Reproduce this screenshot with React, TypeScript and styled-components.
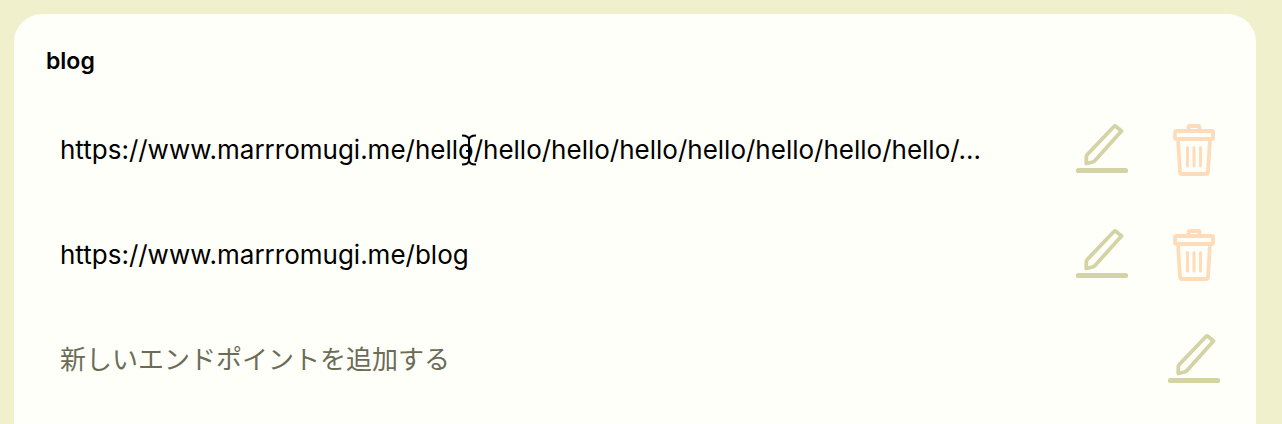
import React from "react";
import styled, { createGlobalStyle } from "styled-components";

const GlobalStyle = createGlobalStyle`
  * { box-sizing: border-box; }
  body {
    margin: 0;
    background: #f1f0cc;
    color: #000;
    font-family: Inter, "Noto Sans CJK JP", sans-serif;
  }
`;

const Page = styled.main`
  padding: 14px 26px 0 14px;
`;

const Card = styled.section`
  min-height: calc(100vh - 14px);
  padding: 32px 32px 0;
  border-radius: 28px 28px 0 0;
  background: #fffffa;
`;

const Title = styled.h2`
  margin: 0 0 37px;
  font-size: 23px;
  line-height: 30px;
  font-weight: 600;
`;

const List = styled.ul`
  display: flex;
  flex-direction: column;
  gap: 32px;
  margin: 0;
  padding: 0;
  list-style: none;
`;

const Row = styled.li`
  display: flex;
  align-items: center;
  gap: 36px;
  height: 73px;
  padding: 0 2px 0 14px;
`;

const Field = styled.div`
  position: relative;
  flex: 1;
  min-width: 0;
  margin-right: 32px;
`;

const Endpoint = styled.input`
  display: block;
  width: 100%;
  height: 40px;
  padding: 0;
  border: 0;
  outline: 0;
  background: transparent;
  color: #000;
  font: 400 26px/40px Inter, "Noto Sans CJK JP", sans-serif;
  text-overflow: ellipsis;

  &::placeholder {
    color: #6c6c56;
    opacity: 1;
  }
`;

const TextCursor = styled.svg`
  position: absolute;
  top: 4px;
  left: 400px;
  width: 18px;
  height: 32px;
`;

const IconButton = styled.button<{ $tone: string }>`
  display: flex;
  padding: 0;
  border: 0;
  background: none;
  color: ${(p) => p.$tone};
  cursor: pointer;

  svg {
    width: 56px;
    height: 56px;
  }
`;

const EditButton = () => (
  <IconButton type="button" $tone="#d3d3a6" aria-label="編集">
    <svg viewBox="0 0 56 56" fill="none" stroke="currentColor" strokeLinejoin="round">
      <path d="M40 4.500Q41 3.500 42 4.500L47.500 9L21 38.500Q20 39.500 18.500 40L12.300 41.500L12.300 35Q12.300 33.500 13.300 32.500Z" strokeWidth="3.800" />
      <path d="M4.500 48.500H51.500" strokeWidth="5.200" strokeLinecap="round" />
    </svg>
  </IconButton>
);

const DeleteButton = () => (
  <IconButton type="button" $tone="#ffdcb9" aria-label="削除">
    <svg viewBox="0 0 56 56" fill="none" stroke="currentColor" strokeWidth="3.800" strokeLinejoin="round">
      <path d="M22.500 9V5Q22.500 4 23.500 4H32.500Q33.500 4 33.500 5V9" />
      <rect x="9" y="9" width="38" height="8" rx="1.500" />
      <path d="M12 17L14 50Q14.200 52 16 52H40Q41.800 52 42 50L44 17" />
      <path d="M21.500 25.500V44M28 25.500V44M34.500 25.500V44" strokeWidth="3" strokeLinecap="round" />
    </svg>
  </IconButton>
);

const endpoints = [
  "https://www.marrromugi.me/hello/hello/hello/hello/hello/hello/hello/hello/...",
  "https://www.marrromugi.me/blog",
];

export default function App() {
  return (
    <>
      <GlobalStyle />
      <Page>
        <Card>
          <Title>blog</Title>
          <List>
            {endpoints.map((url, i) => (
              <Row key={url}>
                <Field>
                  <Endpoint aria-label="エンドポイント" defaultValue={url} spellCheck={false} />
                  {i === 0 && (
                    <TextCursor viewBox="0 0 18 32" fill="none" aria-hidden="true">
                      <path
                        d="M2 1.500C6 1.500 9 3 9 6C9 3 12 1.500 16 1.500M9 6V26M2 30.500C6 30.500 9 29 9 26C9 29 12 30.500 16 30.500M6 17H12"
                        stroke="#000"
                        strokeWidth="2"
                      />
                    </TextCursor>
                  )}
                </Field>
                <EditButton />
                <DeleteButton />
              </Row>
            ))}
            <Row>
              <Field>
                <Endpoint aria-label="新しいエンドポイント" placeholder="新しいエンドポイントを追加する" />
              </Field>
              <EditButton />
            </Row>
          </List>
        </Card>
      </Page>
    </>
  );
}
